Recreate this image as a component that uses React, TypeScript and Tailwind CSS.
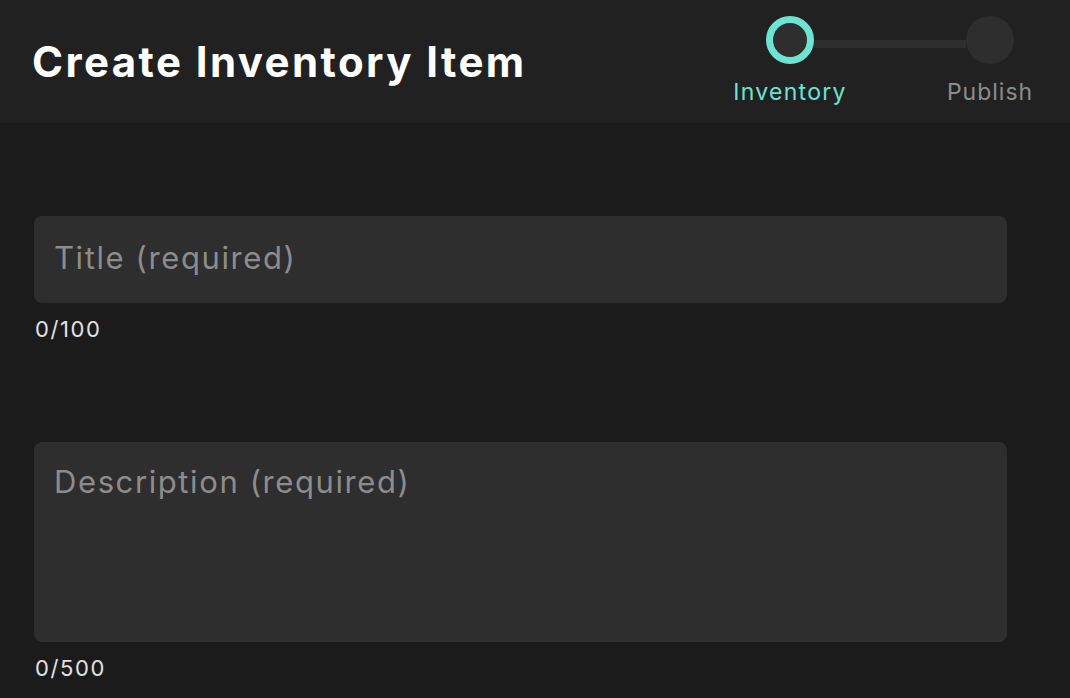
import React from "react";

const font = { fontFamily: "Inter, 'Noto Sans', sans-serif" };

const Stepper = () => {
  return (
    <div className="pt-4 pr-[56px]">
      <div className="grid grid-cols-[48px_152px_48px] items-center">
        <div className="w-12 h-12 rounded-full border-[7px] border-[#6de4d2] bg-[#2e2e2e]" />
        <div className="h-2 mt-2 bg-[#2e2e2e]" />
        <div className="w-12 h-12 rounded-full bg-[#2e2e2e]" />
        <div className="flex justify-center mt-[11px]">
          <span className="whitespace-nowrap text-[23px] tracking-[1.3px] text-[#6de4d2]">Inventory</span>
        </div>
        <div />
        <div className="flex justify-center mt-[11px]">
          <span className="whitespace-nowrap text-[23px] tracking-[1px] text-[#8d8d8d]">Publish</span>
        </div>
      </div>
    </div>
  );
};

const Field = ({ placeholder, count, tall }: { placeholder: string; count: string; tall?: boolean }) => {
  return (
    <div>
      {tall ? (
        <textarea
          placeholder={placeholder}
          className="block w-full h-[200px] resize-none rounded-lg bg-[#2e2e2e] px-5 pt-[17px] text-[31px] tracking-[1.6px] text-white placeholder:text-[#8c8c8c] outline-none"
          style={font}
        />
      ) : (
        <input
          placeholder={placeholder}
          className="block w-full h-[87px] rounded-lg bg-[#2e2e2e] px-5 pb-1 text-[31px] tracking-[1.6px] text-white placeholder:text-[#8c8c8c] outline-none"
          style={font}
        />
      )}
      <div className="mt-[10px] pl-px text-[22px] tracking-[1.6px] text-[#e2e2e2]">{count}</div>
    </div>
  );
};

export default function App() {
  return (
    <div className="min-h-screen bg-[#1b1b1b]" style={font}>
      <header className="h-[123px] bg-[#212121] flex justify-between">
        <h1 className="self-center pl-8 pb-[1px] text-[42px] font-bold text-white tracking-[2.4px]">
          Create Inventory Item
        </h1>
        <Stepper />
      </header>
      <main className="pl-[34px] pr-[63px] pt-[93px] flex flex-col gap-[96px]">
        <Field placeholder="Title (required)" count="0/100" />
        <Field placeholder="Description (required)" count="0/500" tall />
      </main>
    </div>
  );
}
